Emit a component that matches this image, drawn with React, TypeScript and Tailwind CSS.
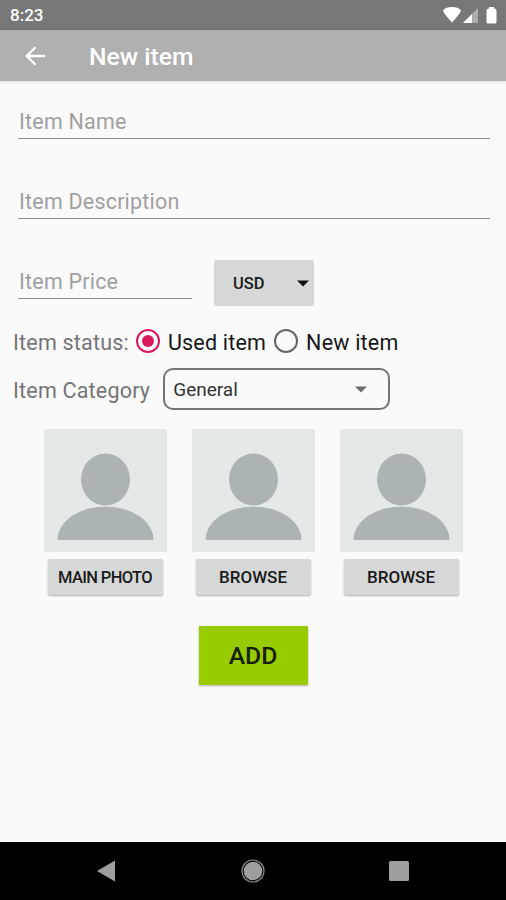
import { useState } from 'react';

interface HintFieldProps {
  hint: string;
  className: string;
}

function HintField({ hint, className }: HintFieldProps) {
  return (
    <div className={`flex h-[30px] items-start border-b border-[#8c8c8c] pl-px ${className}`}>
      <span className="whitespace-nowrap text-[21.5px] leading-[26px] tracking-[0.2px] text-[#a0a0a0]">{hint}</span>
    </div>
  );
}

interface RadioOptionProps {
  label: string;
  checked: boolean;
  onSelect: () => void;
}

function RadioOption({ label, checked, onSelect }: RadioOptionProps) {
  return (
    <button type="button" role="radio" aria-checked={checked} onClick={onSelect} className="flex items-center gap-2">
      <svg width="24" height="24" viewBox="0 0 24 24" fill="none">
        <circle cx="12" cy="12" r="11" stroke={checked ? '#d81b60' : '#666666'} strokeWidth="2" />
        {checked && <circle cx="12" cy="12" r="6" fill="#d81b60" />}
      </svg>
      <span className="whitespace-nowrap pt-[3px] text-[21.5px] leading-7 tracking-[0.2px] text-[#161616]">{label}</span>
    </button>
  );
}

interface PhotoSlotProps {
  label: string;
  condensed?: boolean;
}

function PhotoSlot({ label, condensed = false }: PhotoSlotProps) {
  return (
    <div className="flex w-[123px] flex-col items-center gap-[7px]">
      <svg width="123" height="123" viewBox="0 0 123 123">
        <rect width="123" height="123" fill="#e4e8e9" />
        <ellipse cx="61.5" cy="50.5" rx="24.5" ry="26" fill="#acb3b5" />
        <path d="M13.5 111A48 33.5 0 0 1 109.5 111Z" fill="#acb3b5" />
      </svg>
      <button
        type="button"
        className={`h-9 w-[115px] whitespace-nowrap rounded-[2px] bg-[#d6d8d7] pt-[2px] font-medium text-[#1a1a1a] shadow-[0_1px_2px_rgba(0,0,0,0.3)] ${
          condensed ? 'text-[16.5px] tracking-[-0.65px]' : 'text-[17px]'
        }`}
      >
        {label}
      </button>
    </div>
  );
}

function StatusBar() {
  return (
    <div className="flex h-[30px] items-center justify-between bg-[#777777] pl-[10px] pr-2 text-white">
      <span className="mt-[2px] text-[17px] font-medium">8:23</span>
      <svg width="56" height="18" viewBox="0 0 56 18">
        <path d="M1 4.5C2.5 2 6 1 10 1S17.5 2 19 4.5C18 8 13.5 12.5 10 16.5C6.5 12.5 2 8 1 4.5Z" fill="white" />
        <path d="M36 2V17H21Z" fill="white" fillOpacity="0.4" />
        <path d="M30 8V17H21Z" fill="white" />
        <path d="M47 1h5v1.5q2.500 0 2.500 2V16q0 1.500-1.500 1.500h-7q-1.500 0-1.500-1.500V4.500q0-2 2.500-2Z" fill="white" />
      </svg>
    </div>
  );
}

function NavigationBar() {
  return (
    <div className="flex h-[58px] items-center justify-between bg-black pl-24 pr-[97px]">
      <svg width="20" height="24" viewBox="0 0 20 24">
        <path d="M1 12L19 1.5V22.5Z" fill="#9e9e9e" />
      </svg>
      <svg width="24" height="24" viewBox="0 0 24 24" fill="none">
        <circle cx="12" cy="12" r="11" stroke="#8a8a8a" strokeWidth="1.2" />
        <circle cx="12" cy="12" r="9.3" fill="#9e9e9e" />
      </svg>
      <svg width="20" height="20" viewBox="0 0 20 20">
        <rect width="20" height="20" rx="1.5" fill="#9e9e9e" />
      </svg>
    </div>
  );
}

export default function App() {
  const [status, setStatus] = useState('used');

  return (
    <div className="flex h-[900px] w-[506px] flex-col overflow-hidden bg-[#fafafa] font-[Roboto,sans-serif]">
      <StatusBar />
      <header className="flex h-[51px] items-center gap-[43px] bg-[#b0b0b0] pl-[25px] pt-px text-white shadow-[0_1px_3px_rgba(0,0,0,0.12)]">
        <svg width="21" height="20" viewBox="0 0 21 20" fill="none" stroke="white" strokeWidth="2.3">
          <path d="M20 10H2M10.5 1.2L1.7 10L10.5 18.8" />
        </svg>
        <h1 className="pt-px text-[24.7px] font-medium">New item</h1>
      </header>

      <main className="flex flex-1 flex-col pt-[28px]">
        <HintField hint="Item Name" className="ml-[18px] w-[472px]" />
        <HintField hint="Item Description" className="ml-[18px] mt-[50px] w-[472px]" />

        <div className="ml-[18px] mt-[41px] flex gap-[22px]">
          <HintField hint="Item Price" className="mt-[9px] w-[174px]" />
          <button
            type="button"
            className="flex h-[46px] w-[100px] items-center justify-between rounded-[2px] bg-[#d6d8d7] pl-[19px] pr-[5px] text-[16.5px] font-medium text-[#1a1a1a]"
          >
            <span className="pt-[2px]">USD</span>
            <svg width="12" height="7" viewBox="0 0 12 7">
              <path d="M0 0.5H12L6 6.5Z" fill="#111111" />
            </svg>
          </button>
        </div>

        <div className="ml-[13px] mt-[21px] flex h-7 items-center gap-2" role="radiogroup">
          <span className="-mr-px whitespace-nowrap pt-1 text-[21.5px] tracking-[0.2px] text-[#757575]">Item status:</span>
          <RadioOption label="Used item" checked={status === 'used'} onSelect={() => setStatus('used')} />
          <RadioOption label="New item" checked={status === 'new'} onSelect={() => setStatus('new')} />
        </div>

        <div className="ml-[13px] mt-[13px] flex h-[41px] items-center gap-[13px]">
          <span className="whitespace-nowrap pt-[5px] text-[21.5px] tracking-[0.2px] text-[#757575]">Item Category</span>
          <button
            type="button"
            className="flex h-[42px] w-[227px] items-center justify-between rounded-[10px] border-2 border-[#757575] pl-[8px] pr-[21px] text-[19px] text-[#333333]"
          >
            <span className="pt-[3px]">General</span>
            <svg width="12" height="7" viewBox="0 0 12 7" className="mt-[2px]">
              <path d="M0 0.5H12L6 6.5Z" fill="#6e6e6e" />
            </svg>
          </button>
        </div>

        <div className="mt-[20px] flex justify-center gap-[25px]">
          <PhotoSlot label="MAIN PHOTO" condensed />
          <PhotoSlot label="BROWSE" />
          <PhotoSlot label="BROWSE" />
        </div>

        <button
          type="button"
          className="mt-[31px] h-[59px] w-[109px] self-center bg-[#99cc00] pt-px text-[24.7px] font-medium text-[#14200a] shadow-[0_1px_2px_rgba(0,0,0,0.3)]"
        >
          ADD
        </button>
      </main>

      <NavigationBar />
    </div>
  );
}
